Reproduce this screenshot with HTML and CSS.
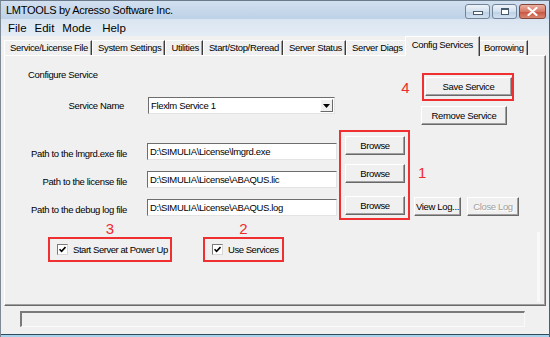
FILE: index.html
```html
<!DOCTYPE html>
<html lang="en">
<head>
  <meta charset="UTF-8">
  <title>LMTOOLS by Acresso Software Inc.</title>
  <link rel="stylesheet" href="styles.css">
</head>
<body>

  <div class="window">
    <div class="titlebar">
      <span class="title">LMTOOLS by Acresso Software Inc.</span>
      <div class="caption">
        <span class="cap-btn"><span class="glyph-min"></span></span>
        <span class="cap-btn"><span class="glyph-max"></span></span>
        <span class="cap-btn close">
          <svg width="11" height="9" viewBox="0 0 11 9">
            <path d="M1.5 1 L9.5 8 M9.5 1 L1.5 8" stroke="#fff" stroke-width="2.2" stroke-linecap="round"/>
          </svg>
        </span>
      </div>
    </div>

    <div class="menubar">
      <span class="menu-item">File</span>
      <span class="menu-item">Edit</span>
      <span class="menu-item menu-mode">Mode</span>
      <span class="menu-item">Help</span>
    </div>

    <div class="tabs">
      <span class="tab">Service/License File</span>
      <span class="tab">System Settings</span>
      <span class="tab">Utilities</span>
      <span class="tab">Start/Stop/Reread</span>
      <span class="tab">Server Status</span>
      <span class="tab">Server Diags</span>
      <span class="tab active">Config Services</span>
      <span class="tab">Borrowing</span>
    </div>

    <div class="panel">
      <div class="top-section">
        <div class="service-col">
          <div class="section-title">Configure Service</div>
          <div class="service-row">
            <span class="service-label">Service Name</span>
            <div class="combo">
              <span class="combo-text">Flexlm Service 1</span>
              <span class="combo-arrow">
                <svg width="7" height="4" viewBox="0 0 7 4"><path d="M0 0 H7 L3.5 4 Z" fill="#000"/></svg>
              </span>
            </div>
          </div>
        </div>
        <div class="service-actions">
          <div class="save-row">
            <span class="marker marker-4">4</span>
            <div class="red-box save-box">
              <button class="btn save-btn">Save Service</button>
            </div>
          </div>
          <button class="btn remove-btn">Remove Service</button>
        </div>
      </div>

      <div class="paths">
        <div class="fields">
          <div class="path-row">
            <span class="path-label">Path to the lmgrd.exe file</span>
            <input class="text-field" type="text" value="D:\SIMULIA\License\lmgrd.exe" readonly>
          </div>
          <div class="path-row">
            <span class="path-label">Path to the license file</span>
            <input class="text-field" type="text" value="D:\SIMULIA\License\ABAQUS.lic" readonly>
          </div>
          <div class="path-row">
            <span class="path-label">Path to the debug log file</span>
            <input class="text-field" type="text" value="D:\SIMULIA\License\ABAQUS.log" readonly>
          </div>
        </div>
        <div class="red-box browse-box">
          <button class="btn browse-btn">Browse</button>
          <button class="btn browse-btn">Browse</button>
          <button class="btn browse-btn">Browse</button>
        </div>
        <div class="log-col">
          <span class="marker marker-1">1</span>
          <div class="log-buttons">
            <button class="btn view-log">View Log...</button>
            <button class="btn close-log" disabled>Close Log</button>
          </div>
        </div>
      </div>

      <div class="lower">
        <div class="checks">
          <div class="check-group">
            <span class="marker">3</span>
            <label class="red-box check-box power-up">
              <span class="tick">
                <svg width="7" height="7" viewBox="0 0 7 7"><path d="M0.5 3.2 L2.6 5.4 L6.5 1" fill="none" stroke="#000" stroke-width="1.6"/></svg>
              </span>
              Start Server at Power Up
            </label>
          </div>
          <div class="check-group">
            <span class="marker">2</span>
            <label class="red-box check-box use-services">
              <span class="tick">
                <svg width="7" height="7" viewBox="0 0 7 7"><path d="M0.5 3.2 L2.6 5.4 L6.5 1" fill="none" stroke="#000" stroke-width="1.6"/></svg>
              </span>
              Use Services
            </label>
          </div>
        </div>
        <div class="edge-strip"></div>
      </div>
    </div>

    <div class="statusbar">
      <div class="status-field"></div>
    </div>
    <div class="frame-bottom"></div>
  </div>

</body>
</html>
```

FILE: styles.css
```css
body {
  font-family: 'Liberation Sans', Arial, sans-serif;
  font-size: 9.5px;
  letter-spacing: -0.35px;
  color: #000;
  background: #f0f0f0;
  margin: 0;
}

.window {
  width: 550px;
  height: 337px;
  box-sizing: border-box;
  display: flex;
  flex-direction: column;
  overflow: hidden;
  background: #f0f0f0;
  border-top: 1px solid #6b7b8c;
  border-left: 1px solid #7d8995;
  border-right: 1px solid #4f5d6b;
}

/* title bar */

.titlebar {
  height: 18px;
  display: flex;
  justify-content: space-between;
  padding-left: 5px;
  background: linear-gradient(#d2e0f0, #bdd1e7);
}

.title {
  font-size: 11px;
  letter-spacing: -0.3px;
  line-height: 18px;
}

.caption {
  display: flex;
  gap: 2px;
  margin: 3px 3px 0 0;
}

.cap-btn {
  width: 23px;
  height: 13px;
  display: flex;
  align-items: center;
  justify-content: center;
  border: 1px solid #71849a;
  border-radius: 3px;
  background: linear-gradient(#eef3f9, #d3e0ee 50%, #bccfe4 51%, #d0e0f0);
}

.cap-btn.close {
  width: 25px;
  border-color: #84463b;
  background: linear-gradient(#eab1a2, #d67866 50%, #c7513d 51%, #d98671);
}

.glyph-min {
  width: 8px;
  height: 2px;
  margin-top: 3px;
  border: 1px solid #485a6e;
  background: #fff;
}

.glyph-max {
  width: 6px;
  height: 4px;
  border: 1px solid #485a6e;
  border-top-width: 2px;
  background: #fff;
}

/* menu */

.menubar {
  height: 17px;
  display: flex;
  align-items: center;
  padding-left: 3px;
  background: linear-gradient(#dae5f1, #e4ecf5);
}

.menu-item {
  font-size: 11.5px;
  letter-spacing: 0;
  padding: 0 4px;
}

.menu-mode {
  padding-right: 7px;
}

/* tabs */

.tabs {
  height: 19px;
  display: flex;
  align-items: flex-end;
  padding-left: 3px;
}

.tab {
  height: 14px;
  line-height: 14px;
  padding: 0 3px 0 5px;
  border-top: 1px solid #fff;
  border-left: 1px solid #fff;
  border-right: 1px solid #3c3c3c;
  box-shadow: inset -1px 0 #a0a0a0;
}

.tab.active {
  height: 19px;
  line-height: 15px;
  padding: 0 6px;
  margin: 0 -2px -1px;
  position: relative;
  z-index: 1;
  background: #f0f0f0;
}

/* panel */

.panel {
  height: 251px;
  box-sizing: border-box;
  margin: 0 3px;
  border-top: 1px solid #fff;
  border-left: 1px solid #fff;
  border-right: 1px solid #6a6a6a;
  border-bottom: 1px solid #6a6a6a;
  box-shadow: inset -1px -1px #a0a0a0;
}

.top-section {
  display: flex;
}

.service-col {
  flex: 1;
}

.section-title {
  margin: 13px 0 0 23px;
  line-height: 12px;
}

.service-row {
  display: flex;
  align-items: center;
  margin-top: 16px;
}

.service-label {
  width: 119px;
  text-align: right;
}

.combo {
  width: 187px;
  height: 17px;
  box-sizing: border-box;
  margin-left: 24px;
  display: flex;
  align-items: center;
  justify-content: space-between;
  background: #fff;
  border: 1px solid;
  border-color: #6d6d6d #e3e3e3 #e3e3e3 #6d6d6d;
}

.combo-text {
  padding-left: 2px;
}

.combo-arrow {
  width: 11px;
  height: 11px;
  margin-right: 1px;
  display: flex;
  align-items: center;
  justify-content: center;
  background: #f0f0f0;
  border: 1px solid;
  border-color: #fff #6a6a6a #6a6a6a #fff;
}

.service-actions {
  width: 115px;
  margin: 17px 31px 0 0;
}

.save-row {
  display: flex;
  align-items: center;
}

.marker {
  font-size: 15px;
  line-height: 17px;
  letter-spacing: 0;
  color: #ee2b2b;
}

.marker-4 {
  width: 13px;
  text-align: center;
  margin-right: 10px;
}

.red-box {
  border: 2px solid #f03030;
  box-sizing: border-box;
}

.save-box {
  padding: 2px 0 3px 1px;
}

.btn {
  font: inherit;
  letter-spacing: inherit;
  color: #000;
  height: 19px;
  padding: 0;
  background: #f0f0f0;
  border: 1px solid;
  border-color: #fff #696969 #696969 #fff;
  box-shadow: inset -1px -1px #a0a0a0;
}

.save-btn {
  width: 87px;
  display: block;
}

.remove-btn {
  width: 86px;
  margin: 5px 0 0 22px;
  display: block;
}

/* paths */

.paths {
  display: flex;
  margin-top: 5px;
}

.fields {
  width: 334px;
  padding-top: 13px;
}

.path-row {
  display: flex;
  align-items: center;
  height: 17px;
}

.path-row + .path-row {
  margin-top: 11px;
}

.path-label {
  width: 122px;
  text-align: right;
  padding-top: 3px;
}

.text-field {
  font: inherit;
  letter-spacing: inherit;
  width: 190px;
  height: 17px;
  box-sizing: border-box;
  margin: 0 0 0 20px;
  padding: 0 2px;
  background: #fff;
  border: 1px solid;
  border-color: #6d6d6d #e3e3e3 #e3e3e3 #6d6d6d;
  outline: none;
}

.browse-box {
  width: 71px;
  padding: 4px 0 3px 4px;
  display: flex;
  flex-direction: column;
}

.browse-btn {
  width: 60px;
}

.browse-btn:nth-child(2) {
  margin-top: 9px;
}

.browse-btn:nth-child(3) {
  margin-top: 13px;
}

.log-col {
  margin-left: 4px;
  display: flex;
  flex-direction: column;
}

.marker-1 {
  margin: 34px 0 0 4px;
  line-height: 18px;
}

.log-buttons {
  display: flex;
  gap: 6px;
  margin-top: 15px;
}

.view-log {
  width: 47px;
}

.close-log {
  width: 52px;
  color: #a0a0a0;
  text-shadow: 1px 1px #fff;
}

/* check boxes */

.lower {
  display: flex;
  justify-content: space-between;
}

.checks {
  display: flex;
  gap: 31px;
  margin-left: 43px;
}

.check-group {
  display: flex;
  flex-direction: column;
  align-items: center;
}

.check-box {
  height: 25px;
  display: flex;
  align-items: center;
  padding-left: 7px;
  white-space: nowrap;
  letter-spacing: -0.45px;
}

.power-up {
  width: 124px;
}

.use-services {
  width: 81px;
}

.tick {
  width: 9px;
  height: 9px;
  margin-right: 5px;
  display: flex;
  align-items: center;
  justify-content: center;
  background: #fff;
  border: 1px solid;
  border-color: #7a7a7a #d8d8d8 #d8d8d8 #7a7a7a;
}

.edge-strip {
  width: 3px;
  height: 70px;
  margin: 12px 5px 0 0;
  background: #f9f9f9;
}

/* status */

.statusbar {
  height: 28px;
  box-sizing: border-box;
  padding: 5px 0 0 19px;
}

.status-field {
  width: 505px;
  height: 16px;
  box-sizing: border-box;
  border-style: solid;
  border-width: 2px 1px 1px 2px;
  border-color: #7a7a7a #fafafa #fafafa #7a7a7a;
}

.frame-bottom {
  height: 3px;
  box-sizing: border-box;
  border-top: 1px solid #2f4b5e;
  background: #a8d2ec;
}
```
